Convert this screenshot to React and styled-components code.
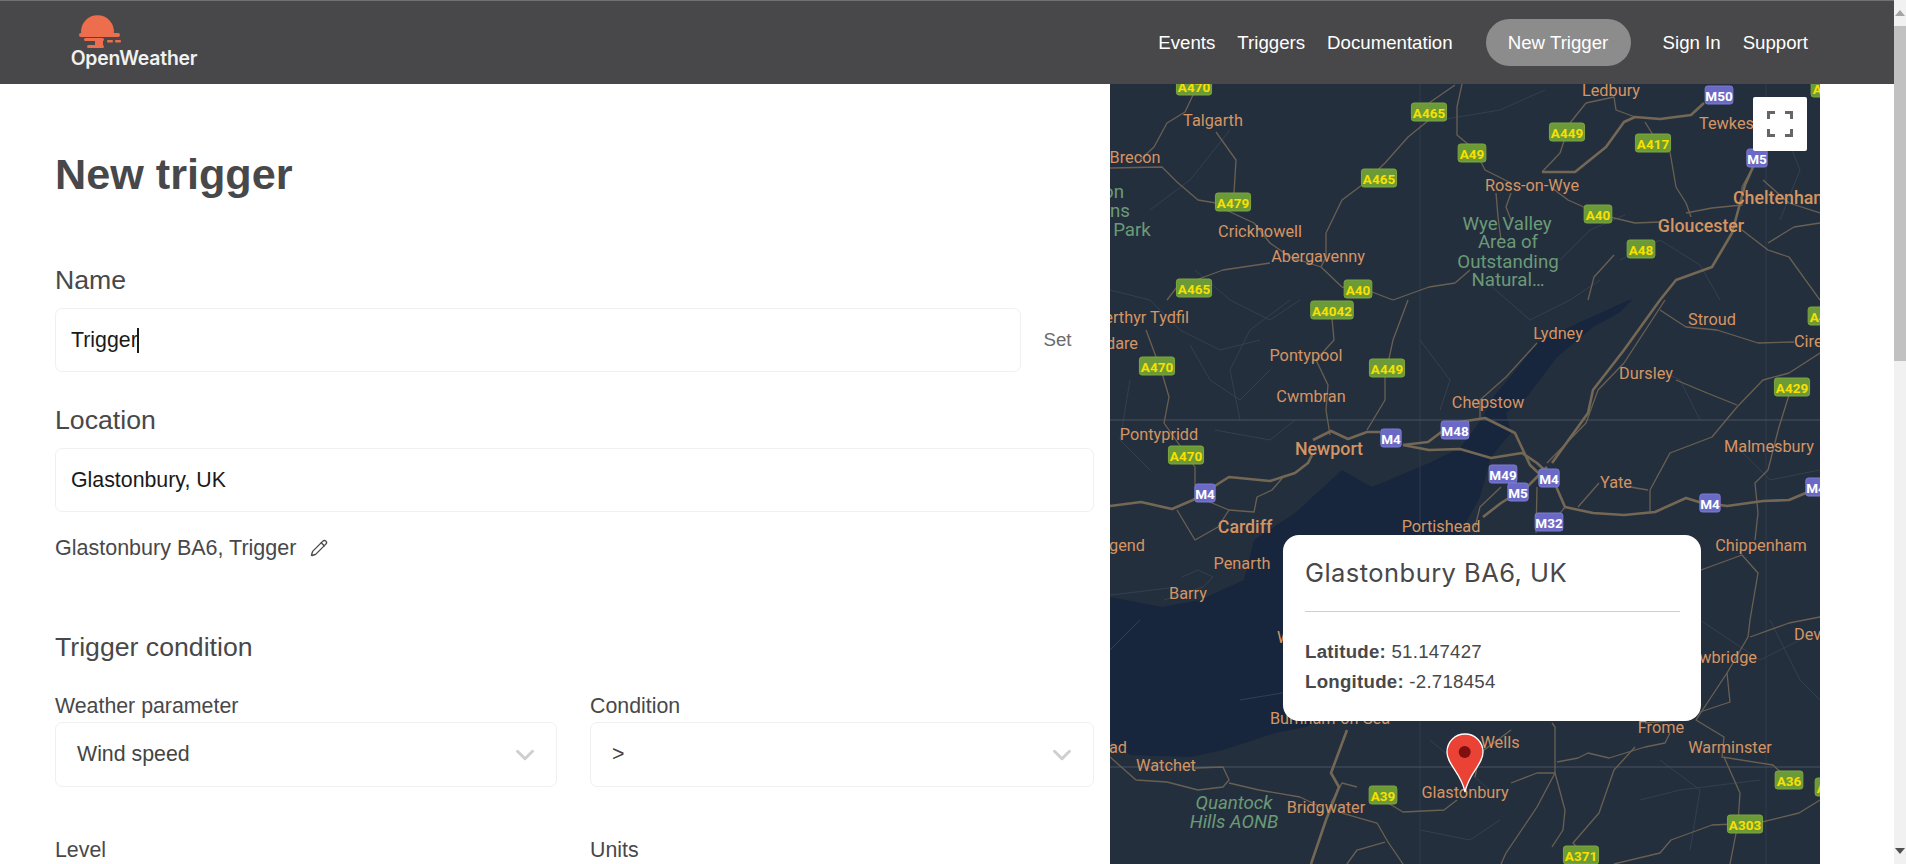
import React from 'react';
import styled, { createGlobalStyle } from 'styled-components';
import { ChevronDown, Pencil } from 'lucide-react';

const GlobalStyle = createGlobalStyle`
  html, body {
    margin: 0;
    height: 100%;
    overflow: hidden;
    background: #fff;
    font-family: "Liberation Sans", Arial, sans-serif;
    color: #48484a;
  }
`;

const Shell = styled.div`
  display: flex;
  width: 1906px;
  height: 864px;
  overflow: hidden;
`;

const Page = styled.div`
  flex: 1;
  display: flex;
  flex-direction: column;
  min-width: 0;
`;

const Header = styled.header`
  flex: none;
  height: 84px;
  box-sizing: border-box;
  border-top: 1px solid #717173;
  background: #48484a;
  display: flex;
  align-items: center;
  justify-content: space-between;
  padding: 0 75px 0 70px;
`;

const Brand = styled.div`
  display: flex;
  flex-direction: column;
  align-items: center;
  width: 128px;
  margin-top: -4px;
`;

const BrandMark = styled.svg`
  display: block;
  align-self: flex-start;
  margin-left: 8px;
`;

const BrandName = styled.span`
  font-family: Inter, "Noto Sans", sans-serif;
  font-weight: 600;
  font-size: 19.4px;
  line-height: 16px;
  letter-spacing: -0.2px;
  color: #f1f1f1;
`;

const Nav = styled.nav`
  display: flex;
  align-items: center;
`;

const NavLink = styled.a`
  padding: 0 11px;
  font-size: 18.67px;
  line-height: 47px;
  color: #fff;
`;

const NewTriggerButton = styled.a`
  margin: 0 21px 0 22px;
  width: 145px;
  height: 47px;
  border-radius: 24px;
  background: #8c8c8c;
  color: #fff;
  font-size: 18.67px;
  line-height: 47px;
  text-align: center;
`;

const Body = styled.div`
  flex: 1;
  display: flex;
  min-height: 0;
`;

const Form = styled.main`
  flex: none;
  width: 1110px;
  box-sizing: border-box;
  padding: 65px 16px 0 55px;
`;

const Title = styled.h1`
  margin: 0 0 65px;
  font-size: 43.2px;
  line-height: 50px;
  font-weight: 700;
  color: #48484a;
`;

const Label = styled.div`
  font-size: 26.67px;
  line-height: 32px;
  color: #48484a;
  margin-bottom: 12px;
`;

const FieldRow = styled.div`
  display: flex;
  align-items: center;
  margin-bottom: ${(p) => (p.$last ? 0 : 32)}px;
`;

const Field = styled.div`
  box-sizing: border-box;
  flex: 1;
  height: 64px;
  padding: 0 15px;
  display: flex;
  align-items: center;
  border: 1px solid #f0f0f0;
  border-radius: 7px;
  font-size: 21.33px;
  color: #1a1a1a;
`;

const Caret = styled.span`
  display: inline-block;
  width: 2px;
  height: 25px;
  margin-left: -1px;
  background: #1a1a1a;
`;

const SetLink = styled.span`
  flex: none;
  width: 73px;
  text-align: center;
  font-size: 18.67px;
  color: #6b6b6b;
`;

const Resolved = styled.div`
  display: flex;
  align-items: center;
  gap: 14px;
  margin-top: 20px;
  height: 32px;
  font-size: 21.5px;
  color: #48484a;
`;

const Section = styled.h2`
  margin: 67px 0 0;
  font-size: 26.67px;
  line-height: 32px;
  font-weight: 400;
  color: #48484a;
`;

const FieldGrid = styled.div`
  display: grid;
  grid-template-columns: 502px 504px;
  column-gap: 33px;
  row-gap: 50px;
  margin-top: 30px;
`;

const SmallLabel = styled.div`
  font-size: 21.33px;
  line-height: 26px;
  color: #48484a;
  margin-bottom: 3px;
`;

const Select = styled.div`
  box-sizing: border-box;
  height: 65px;
  padding: 0 16px 0 21px;
  display: flex;
  align-items: center;
  justify-content: space-between;
  border: 1px solid #f0f0f0;
  border-radius: 7px;
  font-size: 21.33px;
  color: #444;
`;

const MapPane = styled.section`
  flex: none;
  position: relative;
  width: 710px;
  height: 780px;
  overflow: hidden;
  background: #242f3e;
`;

const MapSvg = styled.svg`
  display: block;
`;

const labelSize = (p) => {
  if (p.$green) return 18.7;
  return p.$big ? 17.8 : 16.3;
};

const PlaceLabel = styled.text`
  font-family: Roboto, sans-serif;
  font-size: ${labelSize}px;
  font-weight: ${(p) => (p.$big ? 500 : 400)};
  font-style: ${(p) => (p.$italic ? 'italic' : 'normal')};
  fill: ${(p) => (p.$green ? '#6b9a76' : '#d59563')};
  dominant-baseline: central;
`;

const ShieldText = styled.text`
  font-family: Roboto, sans-serif;
  font-size: 13.5px;
  font-weight: 700;
  fill: ${(p) => (p.$motorway ? '#fff' : '#f8e000')};
  text-anchor: middle;
  dominant-baseline: central;
`;

const FullscreenButton = styled.button`
  position: absolute;
  top: 13px;
  right: 13px;
  width: 54px;
  height: 54px;
  padding: 0;
  display: flex;
  align-items: center;
  justify-content: center;
  border: 0;
  border-radius: 2px;
  background: #fff;
`;

const Popup = styled.div`
  position: absolute;
  left: 173px;
  top: 451px;
  width: 418px;
  height: 186px;
  box-sizing: border-box;
  padding: 20px 21px 0 22px;
  border-radius: 16px;
  background: #fff;
`;

const PopupTitle = styled.div`
  font-family: Inter, "Noto Sans", sans-serif;
  font-size: 25.5px;
  line-height: 36px;
  letter-spacing: 0.45px;
  color: #48484a;
  padding-bottom: 20px;
  border-bottom: 1px solid #cfcfcf;
  margin-bottom: 24.5px;
`;

const Coordinate = styled.div`
  font-size: 18.67px;
  line-height: 30px;
  letter-spacing: 0.25px;
  color: #48484a;

  b {
    font-weight: 700;
  }
`;

const Gutter = styled.div`
  flex: 1;
  background: #fff;
`;

const Scrollbar = styled.div`
  flex: none;
  width: 12px;
  height: 864px;
  display: flex;
  flex-direction: column;
  background: #f1f1f1;
`;

const ScrollButton = styled.div`
  flex: none;
  height: 26px;
  display: flex;
  align-items: center;
  justify-content: center;

  &::before {
    content: '';
    border-left: 5px solid transparent;
    border-right: 5px solid transparent;
    ${(p) => (p.$down ? 'border-top: 6px solid #505050;' : 'border-bottom: 6px solid #a3a3a3;')}
  }
`;

const ScrollThumb = styled.div`
  flex: none;
  height: 335px;
  background: #c1c1c1;
`;

const ScrollTrack = styled.div`
  flex: 1;
`;

const water =
  '1629,300 1578,323 1537,343 1516,370 1491,400 1483,417 1460,448 1429,463 1372,487 1342,470 1295,513 1254,540 1244,580 1200,600 1162,607 1110,597 1110,740 1130,755 1190,757 1223,750 1275,733 1306,727 1330,713 1345,700 1400,700 1460,533 1480,497 1491,457 1511,433 1506,413 1527,397 1557,357 1593,327 1619,313 1632,300';

const motorways = [
  '1110,506 1141,502 1172,509 1193,500 1221,482 1229,477 1270,481 1295,473 1308,463 1312,455',
  '1313,440 1331,431 1348,439 1367,432 1380,432',
  '1403,445 1429,450 1460,449 1491,458 1522,453 1537,463 1552,477 1565,507 1593,513 1624,515 1655,512 1686,498 1699,502 1727,506 1763,501 1789,500 1820,487',
  '1403,445 1428,442 1440,433 1460,422 1485,418 1515,433 1530,465 1548,482',
  '1704,103 1691,115 1660,119 1635,117 1624,122 1606,147 1575,172 1542,172',
  '1753,167 1745,185 1732,233 1712,267 1676,280 1660,300 1624,350 1593,390 1588,413 1552,463',
  '1547,467 1527,487 1501,503 1483,517',
  '1347,730 1331,773 1339,787 1326,820 1311,864',
];

const roads = [
  '1193,95 1185,112 1167,123 1154,147 1140,160',
  '1110,168 1162,167 1177,182 1198,200 1216,203',
  '1216,132 1236,160 1234,193',
  '1226,210 1254,223 1270,243 1290,257 1321,267',
  '1429,120 1408,137 1385,163 1362,185 1342,200 1326,233 1326,257 1321,267',
  '1321,267 1342,287 1372,292 1393,300',
  '1270,263 1223,270 1177,287 1167,300',
  '1429,103 1455,85',
  '1462,84 1457,107 1457,135 1475,150 1485,170 1511,183',
  '1496,193 1498,217 1501,240',
  '1511,193 1506,207 1511,220',
  '1586,103 1570,123 1560,153 1542,172',
  '1552,188 1568,200 1586,208 1614,218 1635,223 1660,222',
  '1686,213 1712,208 1742,205 1742,187 1753,167',
  '1645,122 1653,135',
  '1670,152 1676,187 1686,203 1691,217',
  '1586,103 1614,97 1616,110 1635,117',
  '1763,180 1789,203 1820,213',
  '1742,230 1768,250 1789,257 1820,300',
  '1820,223 1794,227 1768,243',
  '1614,255 1594,277 1588,300',
  '1470,270 1455,283 1429,287 1393,300',
  '1332,318 1334,340 1316,360 1328,385 1326,410 1330,435',
  '1408,300 1393,340 1385,377 1385,400 1367,430',
  '1146,330 1162,373 1169,397 1164,423 1195,467 1195,485',
  '1205,500 1229,510 1254,512 1257,497 1272,490 1285,475',
  '1177,510 1195,540 1218,527 1229,510',
  '1537,343 1506,377 1480,400 1480,418',
  '1665,300 1624,363 1598,390 1586,423 1547,463',
  '1820,353 1789,373 1763,380 1737,407 1712,437 1670,453 1650,490 1650,513',
  '1789,395 1779,427 1768,470 1755,483 1758,513 1755,540',
  '1660,310 1686,327 1717,330 1758,343 1794,342',
  '1676,380 1707,393 1737,405',
  '1599,483 1578,507',
  '1630,487 1648,490',
  '1565,507 1547,530',
  '1537,487 1536,533',
  '1501,487 1480,507 1475,527',
  '1701,570 1742,555 1758,573 1750,620 1748,637 1727,673 1730,702 1676,720 1645,723',
  '1750,637 1789,623 1820,617',
  '1727,673 1696,720 1724,737 1722,757 1773,765 1789,780',
  '1724,757 1740,793 1738,823 1730,864',
  '1820,800 1799,813 1758,823 1712,825 1671,840 1660,853 1614,864',
  '1555,773 1565,810 1563,830 1552,847',
  '1511,783 1537,773 1555,773 1555,727 1552,723',
  '1557,762 1578,758 1588,753 1609,758 1645,747 1665,743 1670,733',
  '1635,747 1614,770 1599,813 1573,843 1593,864',
  '1555,773 1537,807 1506,853 1501,864',
  '1511,730 1480,753 1475,777',
  '1457,800 1444,810 1403,812 1383,800',
  '1357,787 1342,783 1331,803',
  '1342,813 1377,823 1388,842 1403,864',
  '1385,842 1357,850 1347,864',
  '1110,757 1136,780 1167,782 1198,790 1223,787 1229,780 1223,767 1195,768',
  '1229,783 1259,790 1300,797 1321,807',
];

const lanes = [
  '1110,595 1136,592 1169,588',
  '1182,577 1198,570 1213,577 1203,587 1164,600',
  '1270,370 1240,400 1210,380 1190,345',
  '1290,300 1250,330 1230,370 1240,420',
  '1490,285 1530,320 1570,300 1600,280',
  '1620,260 1660,240 1700,265 1720,300',
  '1700,590 1690,640 1640,725',
  '1140,620 1100,660',
  '1430,740 1490,790',
  '1660,760 1700,790 1690,850',
  '1770,620 1800,680 1820,700',
  '1440,120 1500,110 1545,90',
  '1110,290 1150,300 1180,330 1220,350 1260,340',
  '1195,270 1230,300 1270,320 1300,300',
  '1130,380 1120,440 1150,470',
  '1215,430 1270,440 1295,420',
  '1420,340 1450,380 1440,410',
  '1560,260 1590,230 1625,215',
  '1700,420 1680,380 1660,370',
  '1730,440 1770,480 1820,470',
  '1640,540 1620,590 1580,640',
  '1510,640 1560,690 1610,700',
  '1700,620 1760,660 1800,640',
  '1240,700 1300,690',
  '1420,830 1470,840 1500,820',
  '1640,800 1680,790 1760,780',
  '1780,120 1800,170 1780,220',
  '1230,130 1190,180 1150,210',
];

const places = [
  ['Ledbury', 1611, 90],
  ['Talgarth', 1213, 120],
  ['Brecon', 1135, 157],
  ['Tewkesbury', 1699, 123, { anchor: 'start' }],
  ['Ross-on-Wye', 1532, 185],
  ['Cheltenham', 1733, 197, { anchor: 'start', big: true }],
  ['Gloucester', 1701, 225, { big: true }],
  ['Crickhowell', 1260, 231],
  ['Abergavenny', 1318, 256],
  ['Merthyr Tydfil', 1189, 317, { anchor: 'end' }],
  ['Aberdare', 1138, 343, { anchor: 'end' }],
  ['Pontypool', 1306, 355],
  ['Cwmbran', 1311, 396],
  ['Lydney', 1558, 333],
  ['Stroud', 1712, 319],
  ['Cirencester', 1794, 341, { anchor: 'start' }],
  ['Dursley', 1646, 373],
  ['Chepstow', 1488, 402],
  ['Pontypridd', 1159, 434],
  ['Newport', 1329, 448, { big: true }],
  ['Malmesbury', 1769, 446],
  ['Yate', 1616, 482],
  ['Portishead', 1441, 526],
  ['Cardiff', 1245, 526, { big: true }],
  ['Bridgend', 1145, 545, { anchor: 'end' }],
  ['Chippenham', 1761, 545],
  ['Penarth', 1242, 563],
  ['Barry', 1188, 593],
  ['Devizes', 1794, 634, { anchor: 'start' }],
  ['Trowbridge', 1757, 657, { anchor: 'end' }],
  ['Weston-super-Mare', 1277, 637, { anchor: 'start' }],
  ['Burnham-on-Sea', 1330, 718],
  ['Frome', 1661, 727],
  ['Wells', 1500, 742],
  ['Warminster', 1730, 747],
  ['Minehead', 1127, 747, { anchor: 'end' }],
  ['Watchet', 1166, 765],
  ['Glastonbury', 1465, 792],
  ['Bridgwater', 1326, 807],
  ['on', 1124, 192, { anchor: 'end', green: true }],
  ['ns', 1130, 211, { anchor: 'end', green: true }],
  ['Park', 1132, 230, { green: true }],
  ['Wye Valley', 1507, 224, { green: true }],
  ['Area of', 1508, 242, { green: true }],
  ['Outstanding', 1508, 262, { green: true }],
  ['Natural…', 1508, 280, { green: true }],
  ['Quantock', 1234, 803, { green: true, italic: true }],
  ['Hills AONB', 1234, 822, { green: true, italic: true }],
];

const shields = [
  ['A470', 1194, 86],
  ['M50', 1719, 95],
  ['A46', 1825, 88],
  ['A465', 1429, 112],
  ['A449', 1567, 132],
  ['A417', 1653, 143],
  ['A49', 1472, 153],
  ['M5', 1757, 158],
  ['A465', 1379, 178],
  ['A479', 1233, 202],
  ['A40', 1598, 214],
  ['A48', 1641, 249],
  ['A465', 1194, 288],
  ['A40', 1358, 289],
  ['A4042', 1332, 310],
  ['A46', 1822, 316],
  ['A470', 1157, 366],
  ['A449', 1387, 368],
  ['A429', 1792, 387],
  ['A470', 1186, 455],
  ['M4', 1391, 438],
  ['M48', 1455, 430],
  ['M49', 1503, 474],
  ['M5', 1518, 492],
  ['M4', 1549, 478],
  ['M4', 1205, 493],
  ['M4', 1710, 503],
  ['M4', 1816, 487],
  ['M32', 1549, 522],
  ['A39', 1383, 795],
  ['A36', 1789, 780],
  ['A36', 1829, 787],
  ['A303', 1745, 824],
  ['A371', 1581, 855],
];

const Shield = ({ name, x, y }) => {
  const motorway = name.startsWith('M');
  const width = name.length * 7.4 + 5.5;
  return (
    <g>
      <rect
        x={x - width / 2}
        y={y - 9}
        width={width}
        height={18}
        rx={2.5}
        fill={motorway ? '#6a6ac6' : '#6c9a36'}
        stroke={motorway ? '#7c7cd0' : '#7da642'}
      />
      <ShieldText x={x} y={y + 0.5} $motorway={motorway}>{name}</ShieldText>
    </g>
  );
};

const NightMap = () => (
  <MapSvg width="710" height="780" viewBox="1110 84 710 780">
    <polygon points={water} fill="#17263c" />
    <g fill="none" stroke="#334050" strokeWidth="1" strokeLinejoin="round">
      {lanes.map((points) => <polyline key={points} points={points} />)}
      <line x1="1420" y1="84" x2="1420" y2="864" stroke="#2e3a4a" />
      <line x1="1766" y1="84" x2="1766" y2="864" stroke="#2e3a4a" />
      <line x1="1110" y1="420" x2="1820" y2="420" stroke="#4a5361" />
      <line x1="1110" y1="767" x2="1820" y2="767" stroke="#4a5361" />
    </g>
    <g fill="none" stroke="#6a6052" strokeWidth="1.3" strokeLinejoin="round">
      {roads.map((points) => <polyline key={points} points={points} />)}
    </g>
    <g fill="none" stroke="#746855" strokeWidth="2.6" strokeLinejoin="round">
      {motorways.map((points) => <polyline key={points} points={points} />)}
    </g>
    {places.map(([name, x, y, opts = {}]) => (
      <PlaceLabel
        key={name}
        x={x}
        y={y}
        textAnchor={opts.anchor || 'middle'}
        $big={opts.big}
        $green={opts.green}
        $italic={opts.italic}
      >
        {name}
      </PlaceLabel>
    ))}
    {shields.map(([name, x, y]) => <Shield key={`${name}-${x}`} name={name} x={x} y={y} />)}
    <path
      d="M1465 734c-10 0-18 8-18 18 0 13 14 20 18 40 4-20 18-27 18-40 0-10-8-18-18-18z"
      fill="#ea4335"
      stroke="#fff"
      strokeWidth="1.3"
    />
    <circle cx="1464.7" cy="752" r="6" fill="#7f1010" />
  </MapSvg>
);

const Logo = () => (
  <BrandMark width="44" height="35" viewBox="0 0 44 35">
    <g fill="#ec6e4c">
      <path d="M3.1 18.5A16.5 16.5 0 1 1 35.9 18.5z" />
      <rect x="1" y="18" width="41" height="4" rx="2" />
      <rect x="6" y="23" width="20" height="3" rx="1.5" />
      <rect x="29" y="25" width="6" height="2.5" rx="1" />
      <rect x="37" y="25" width="6" height="2.5" rx="1" />
      <rect x="17" y="26" width="8" height="5" />
      <rect x="9" y="30" width="17" height="3" rx="1.5" />
    </g>
  </BrandMark>
);

const FullscreenIcon = () => (
  <svg width="26" height="26" viewBox="0 0 26 26" fill="none" stroke="#666" strokeWidth="3">
    <path d="M1.5 8V1.5H8M18 1.5h6.5V8M24.5 18v6.5H18M8 24.5H1.5V18" />
  </svg>
);

const App = () => (
  <Shell>
    <GlobalStyle />
    <Page>
      <Header>
        <Brand>
          <Logo />
          <BrandName>OpenWeather</BrandName>
        </Brand>
        <Nav>
          <NavLink>Events</NavLink>
          <NavLink>Triggers</NavLink>
          <NavLink>Documentation</NavLink>
          <NewTriggerButton>New Trigger</NewTriggerButton>
          <NavLink>Sign In</NavLink>
          <NavLink>Support</NavLink>
        </Nav>
      </Header>
      <Body>
        <Form>
          <Title>New trigger</Title>
          <Label>Name</Label>
          <FieldRow>
            <Field>Trigger<Caret /></Field>
            <SetLink>Set</SetLink>
          </FieldRow>
          <Label>Location</Label>
          <FieldRow $last>
            <Field>Glastonbury, UK</Field>
          </FieldRow>
          <Resolved>
            Glastonbury BA6, Trigger
            <Pencil size={18} strokeWidth={1.8} color="#48484a" />
          </Resolved>
          <Section>Trigger condition</Section>
          <FieldGrid>
            <div>
              <SmallLabel>Weather parameter</SmallLabel>
              <Select>Wind speed<ChevronDown size={30} strokeWidth={2.4} color="#cfcfcf" /></Select>
            </div>
            <div>
              <SmallLabel>Condition</SmallLabel>
              <Select>&gt;<ChevronDown size={30} strokeWidth={2.4} color="#cfcfcf" /></Select>
            </div>
            <SmallLabel>Level</SmallLabel>
            <SmallLabel>Units</SmallLabel>
          </FieldGrid>
        </Form>
        <MapPane>
          <NightMap />
          <FullscreenButton><FullscreenIcon /></FullscreenButton>
          <Popup>
            <PopupTitle>Glastonbury BA6, UK</PopupTitle>
            <Coordinate><b>Latitude:</b> 51.147427</Coordinate>
            <Coordinate><b>Longitude:</b> -2.718454</Coordinate>
          </Popup>
        </MapPane>
        <Gutter />
      </Body>
    </Page>
    <Scrollbar>
      <ScrollButton />
      <ScrollThumb />
      <ScrollTrack />
      <ScrollButton $down />
    </Scrollbar>
  </Shell>
);

export default App;
